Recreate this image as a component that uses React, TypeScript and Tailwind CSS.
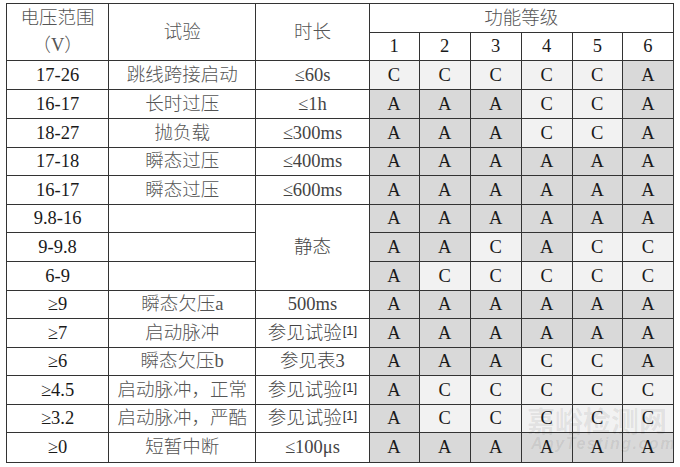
import React from "react";

type Row = { v: string; t: React.ReactNode; d?: React.ReactNode; dSpan?: number; noD?: boolean; g: string; h: number };

const Sup = () => <sup className="text-[13px] font-['Liberation_Sans'] relative -top-[4px] text-[#333] ml-[1px]">[1]</sup>;
const Ref = () => (
  <span>
    参见试验
    <Sup />
  </span>
);

const rows: Row[] = [
  { v: "17-26", t: "跳线跨接启动", d: "≤60s", g: "CCCCCA", h: 29 },
  { v: "16-17", t: "长时过压", d: "≤1h", g: "AAACCA", h: 29 },
  { v: "18-27", t: "抛负载", d: "≤300ms", g: "AAACCA", h: 29 },
  { v: "17-18", t: "瞬态过压", d: "≤400ms", g: "AAAAAA", h: 28 },
  { v: "16-17", t: "瞬态过压", d: "≤600ms", g: "AAAAAA", h: 29 },
  { v: "9.8-16", t: "", d: "静态", dSpan: 3, g: "AAAAAA", h: 28 },
  { v: "9-9.8", t: "", noD: true, g: "AACACC", h: 29 },
  { v: "6-9", t: "", noD: true, g: "ACCCCC", h: 29 },
  { v: "≥9", t: "瞬态欠压a", d: "500ms", g: "AAAAAA", h: 28 },
  { v: "≥7", t: "启动脉冲", d: <Ref />, g: "AAAAAA", h: 29 },
  { v: "≥6", t: "瞬态欠压b", d: "参见表3", g: "AAACCA", h: 28 },
  { v: "≥4.5", t: "启动脉冲，正常", d: <Ref />, g: "ACCCCC", h: 29 },
  { v: "≥3.2", t: "启动脉冲，严酷", d: <Ref />, g: "ACCCCC", h: 28 },
  { v: "≥0", t: "短暂中断", d: "≤100μs", g: "AAAAAA", h: 30 },
];

const cell = "border border-[#333] text-center align-middle p-0 leading-none";

export default function App() {
  return (
    <div className="w-[680px] h-[467px] bg-white relative overflow-hidden font-['Liberation_Serif','Noto_Sans_CJK_SC',serif] text-[18.5px] text-[#1a1a1a]">
      <div className="pl-[6px] pt-[3px]">
        <table className="table-fixed border-collapse w-[668px]">
          <colgroup>
            <col className="w-[102px]" />
            <col className="w-[147px]" />
            <col className="w-[113px]" />
            <col className="w-[50px]" />
            <col className="w-[51px]" />
            <col className="w-[51px]" />
            <col className="w-[51px]" />
            <col className="w-[50px]" />
            <col className="w-[51px]" />
          </colgroup>
          <thead>
            <tr className="h-[29px]">
              <th rowSpan={2} className={`${cell} font-light text-[#555]`}>
                <div className="leading-[27px]">
                  电压范围
                  <br />
                  （V）
                </div>
              </th>
              <th rowSpan={2} className={`${cell} font-light text-[#555]`}>试验</th>
              <th rowSpan={2} className={`${cell} font-light text-[#555]`}>时长</th>
              <th colSpan={6} className={`${cell} font-light text-[#555]`}>功能等级</th>
            </tr>
            <tr className="h-[28px]">
              {[1, 2, 3, 4, 5, 6].map((n) => (
                <th key={n} className={`${cell} font-normal`}>
                  {n}
                </th>
              ))}
            </tr>
          </thead>
          <tbody>
            {rows.map((r, i) => (
              <tr key={i} style={{ height: r.h }}>
                <td className={cell}>{r.v}</td>
                <td className={`${cell} font-light text-[#555]`}>{r.t}</td>
                {!r.noD && (
                  <td rowSpan={r.dSpan} className={`${cell} font-light text-[#444]`}>
                    {r.d}
                  </td>
                )}
                {r.g.split("").map((c, j) => (
                  <td
                    key={j}
                    className={`${cell} ${c === "A" ? "bg-[#d9d9d9]" : "bg-[#f2f2f2]"}`}
                  >
                    {c}
                  </td>
                ))}
              </tr>
            ))}
          </tbody>
        </table>
      </div>
      <div className="absolute left-[527px] top-[404px] w-[143px] pointer-events-none select-none text-[rgba(0,0,0,0.08)]">
        <div className="font-['Noto_Sans_CJK_SC',sans-serif] font-bold text-[28px] leading-[32px]">嘉峪检测网</div>
        <div className="font-['Liberation_Sans',sans-serif] font-bold italic text-[16px] leading-[16px] tracking-[1.5px] pl-[4px]">AnyTesting.com</div>
      </div>
    </div>
  );
}
